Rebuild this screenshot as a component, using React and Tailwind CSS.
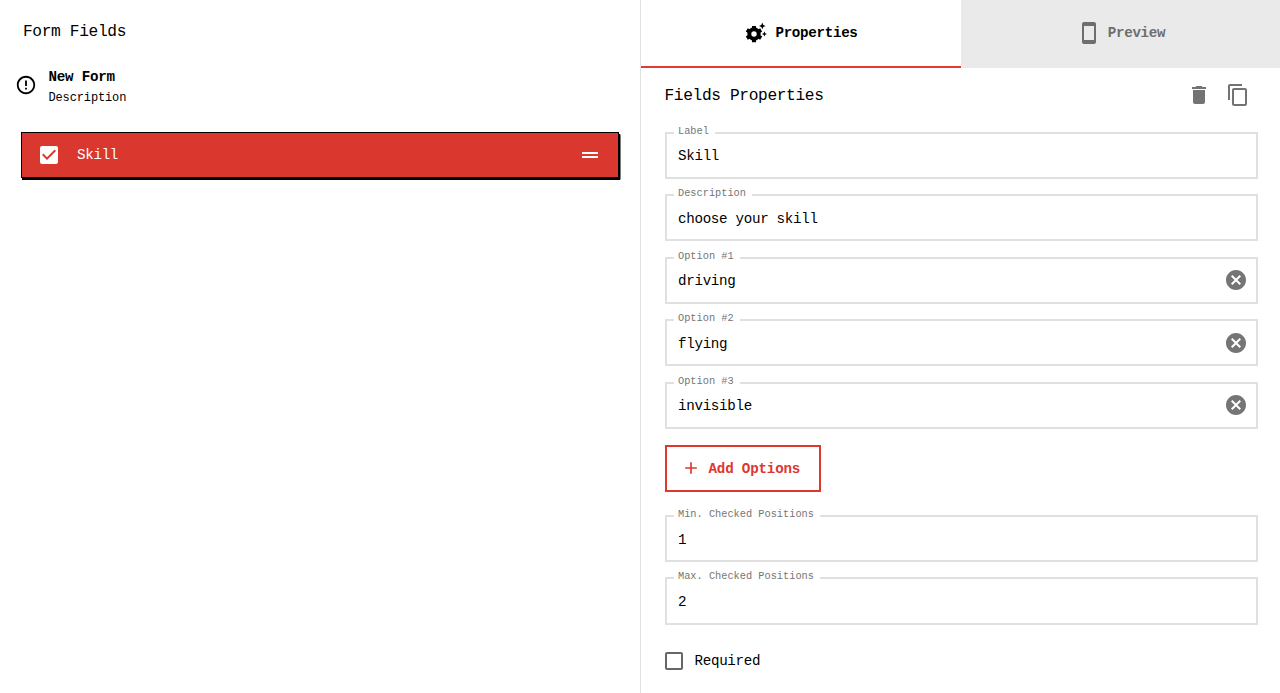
import React from "react";
import {
  MdErrorOutline,
  MdCheckBox,
  MdDragHandle,
  MdStayCurrentPortrait,
  MdDelete,
  MdContentCopy,
  MdCancel,
  MdAdd,
  MdCheckBoxOutlineBlank,
} from "react-icons/md";

function GearSparkle({ className }) {
  return (
    <svg viewBox="0 0 22 22" className={className} fill="currentColor" aria-hidden="true">
      <circle cx="9" cy="12" r="4.7" fill="none" stroke="currentColor" strokeWidth="4" />
      <g stroke="currentColor" strokeWidth="4" strokeLinecap="butt">
        <path d="M9 6.5V3.9M9 17.5v2.7M14 9.2l2.2-1.3M14 14.8l2.2 1.3M4 9.2L1.8 7.9M4 14.8l-2.2 1.3" />
      </g>
      <path d="M17.3 0.6l1 2.3 2.3 1-2.3 1-1 2.3-1-2.3-2.3-1 2.3-1z" stroke="#fff" strokeWidth="2" paintOrder="stroke" />
      <path d="M19.4 9.4l.8 1.8 1.8.8-1.8.8-.8 1.8-.8-1.8-1.8-.8 1.8-.8z" />
    </svg>
  );
}

function Field({ label, value, clearable }) {
  return (
    <div className="relative flex h-[47.2px] items-center justify-between border-2 border-[#e0e0e0] pl-[11.5px] pr-[8px]">
      <span className="absolute left-[7.5px] top-[-12px] whitespace-pre bg-white pl-1 pr-1.5 text-[10.3px] leading-[18px] text-[#757575]">
        {label}
      </span>
      <span className="pt-[2px] text-[14.2px] leading-5 tracking-[-0.3px]">{value}</span>
      {clearable && <MdCancel className="size-6 text-[#757575]" />}
    </div>
  );
}

function FormFields() {
  return (
    <section className="w-[641px] shrink-0 border-r border-[#e2e2e2]">
      <h2 className="pl-[23px] pt-5 text-[16.2px] leading-6 tracking-[-0.35px]">Form Fields</h2>
      <div className="mt-[21px] flex items-center pl-[15.4px]">
        <MdErrorOutline className="mb-[2px] size-[22px]" />
        <div className="pl-[11px]">
          <p className="text-[14.2px] font-bold leading-6 tracking-[-0.2px]">New Form</p>
          <p className="pt-px text-[12px] leading-[17px] tracking-[-0.12px]">Description</p>
        </div>
      </div>
      <div className="ml-[21px] mt-[25px] flex h-[46px] w-[598px] items-center border border-black bg-[#da372f] text-white shadow-[1px_2px_0_0_#000,2px_2px_0_-0.5px_#000]">
        <MdCheckBox className="ml-[15.4px] size-6" />
        <span className="ml-[15.6px] flex-1 text-[14.2px] leading-5 tracking-[-0.3px]">Skill</span>
        <MdDragHandle className="mr-4 size-6" />
      </div>
    </section>
  );
}

function Tabs() {
  return (
    <div className="flex h-[68px] text-[14.2px] font-bold tracking-[-0.3px]">
      <div className="flex w-80 items-center justify-center gap-2 border-b-2 border-[#e53935] pl-px">
        <GearSparkle className="size-[22px]" />
        <span className="pt-[2px]">Properties</span>
      </div>
      <div className="flex flex-1 items-center justify-center gap-[7px] bg-[#eaeaea] pb-[3px] pl-[1px] text-[#6e6e6e]">
        <MdStayCurrentPortrait className="size-6" />
        <span className="pt-[2px]">Preview</span>
      </div>
    </div>
  );
}

function Properties() {
  return (
    <section className="min-w-0 flex-1">
      <Tabs />
      <div className="pl-[23.5px] pr-[22px]">
        <div className="flex h-[63.8px] items-start justify-between pt-[15px]">
          <h2 className="pt-px text-[16.2px] leading-6 tracking-[-0.36px]">Fields Properties</h2>
          <div className="flex items-center gap-[15px] pr-[8px] text-[#737373]">
            <MdDelete className="size-6" />
            <MdContentCopy className="size-6" />
          </div>
        </div>
        <div className="flex flex-col gap-[15.3px]">
          <Field label="Label" value="Skill" />
          <Field label="Description" value="choose your skill" />
          <Field label="Option #1" value="driving" clearable />
          <Field label="Option #2" value="flying" clearable />
          <Field label="Option #3" value="invisible" clearable />
        </div>
        <button className="mt-4 flex h-[47px] w-[156.5px] items-center border-2 border-[#dd3730] pl-[14.5px] text-[#dd3730]">
          <MdAdd className="size-[20px]" />
          <span className="pl-[7.5px] pt-[2px] text-[14.2px] font-bold leading-5 tracking-[-0.18px]">Add Options</span>
        </button>
        <div className="mt-[23px] flex flex-col gap-[15.3px]">
          <Field label="Min. Checked Positions" value="1" />
          <Field label="Max. Checked Positions" value="2" />
        </div>
        <div className="mt-6 flex items-center gap-[8.5px]">
          <MdCheckBoxOutlineBlank className="ml-[-2.5px] size-6 text-[#666]" />
          <span className="text-[14.2px] leading-5 tracking-[-0.3px]">Required</span>
        </div>
      </div>
    </section>
  );
}

export default function App() {
  return (
    <main className="flex h-screen w-full overflow-hidden bg-white font-['Liberation_Mono',monospace] text-black antialiased">
      <FormFields />
      <Properties />
    </main>
  );
}
